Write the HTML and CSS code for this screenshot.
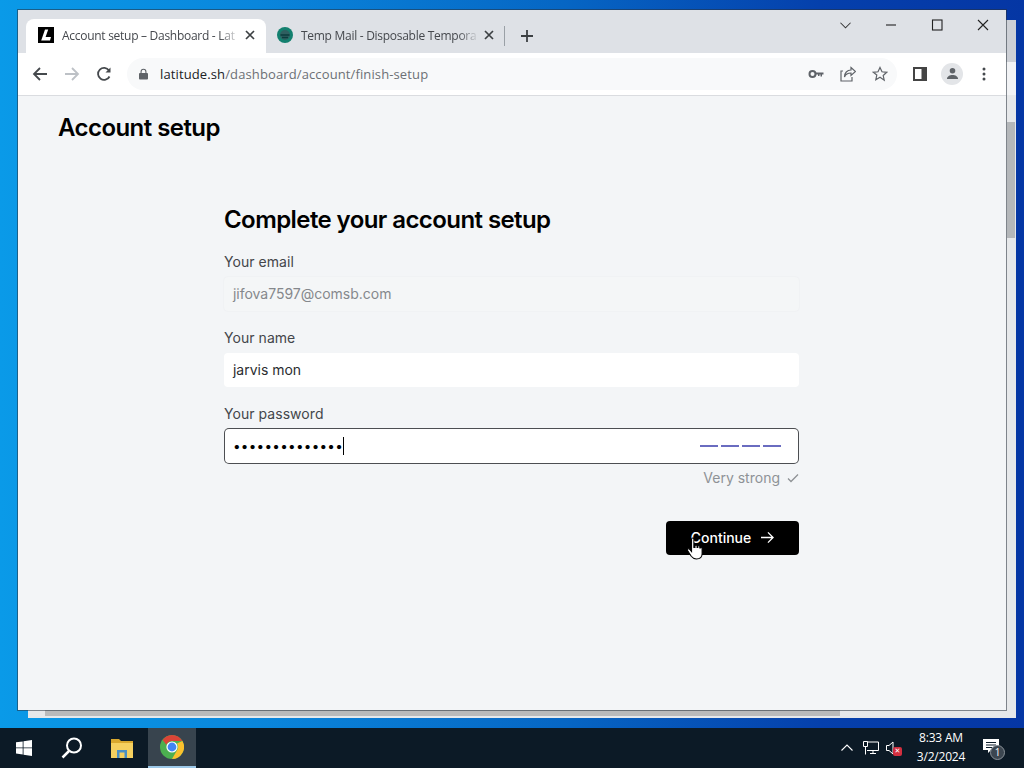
FILE: index.html
```html
<!DOCTYPE html>
<html lang="en">
<head>
<meta charset="utf-8">
<title>Account setup</title>
<link rel="stylesheet" href="styles.css">
</head>
<body>
<div class="desktop">
  <div class="wallpaper">
    <div class="backwin"><div class="backthumb-v"></div><div class="backthumb-h"></div></div>
    <div class="window">
      <div class="titlebar">
        <div class="tabs">
          <div class="tab active">
            <svg class="favicon" viewBox="0 0 16 16"><rect width="16" height="16" fill="#000"/><path d="M7 2.500h3.200L7.600 10H13l-1 3.500H3.200z" fill="#fff"/></svg>
            <span class="tab-title">Account setup – Dashboard - Lat</span>
            <svg class="tab-x" viewBox="0 0 10 10"><path d="M1 1l8 8M9 1l-8 8"/></svg>
          </div>
          <div class="tab">
            <svg class="favicon" viewBox="0 0 16 16"><circle cx="8" cy="8" r="8" fill="#13806f"/><circle cx="8" cy="8" r="5" fill="#2f5f60"/><path d="M3.500 8h9M5 10.500h6" stroke="#0b3d3d" stroke-width="1.300"/></svg>
            <span class="tab-title">Temp Mail - Disposable Tempora</span>
            <svg class="tab-x" viewBox="0 0 10 10"><path d="M1 1l8 8M9 1l-8 8"/></svg>
          </div>
          <div class="tab-sep"></div>
          <svg class="newtab" viewBox="0 0 12 12"><path d="M6 0v12M0 6h12"/></svg>
        </div>
        <div class="winctl">
          <svg class="ctl-chev" viewBox="0 0 12 7"><path d="M.5.500 6 6 11.500.500"/></svg>
          <svg class="ctl" viewBox="0 0 12 12"><path d="M1 6h10"/></svg>
          <svg class="ctl" viewBox="0 0 12 12"><rect x="1.500" y="1" width="9.500" height="10"/></svg>
          <svg class="ctl" viewBox="0 0 12 12"><path d="M1 1l10 10M11 1 1 11"/></svg>
        </div>
      </div>
      <div class="toolbar">
        <svg class="nav" viewBox="0 0 16 16"><path d="M15 8H2M8 2 2 8l6 6"/></svg>
        <svg class="nav off" viewBox="0 0 16 16"><path d="M1 8h13M8 2l6 6-6 6"/></svg>
        <svg class="nav" viewBox="0 0 16 16"><path d="M13.500 10.500A6 6 0 1 1 13 4.500"/><path class="fill" d="M14.500 1.500v5h-5z"/></svg>
        <div class="omnibox">
          <svg class="lock" viewBox="0 0 10 12"><path d="M2.300 5V3.500a2.700 2.700 0 0 1 5.400 0V5" fill="none" stroke="#5f6368" stroke-width="1.200"/><rect y="5" width="10" height="7" rx="1" fill="#5f6368"/></svg>
          <span class="url"><span class="host">latitude.sh</span>/dashboard/account/finish-setup</span>
          <div class="omni-icons">
            <svg class="omni" viewBox="0 0 16 16"><circle cx="4.500" cy="8" r="3" fill="none" stroke="#5f6368" stroke-width="2"/><path d="M7 6.500h8.500v2H14v2h-1.500v-2h-1v1.500H10V8.500H7z" fill="#5f6368"/></svg>
            <svg class="omni line" viewBox="0 0 16 16"><path d="M11 1.500 15.500 5.500 11 9.500V7C7.500 7 5.500 8.500 4.500 11 4.500 7 7 4 11 4zM3 5H1v10h11v-4"/></svg>
            <svg class="omni line" viewBox="0 0 16 16"><path d="M8 1.500l2 4.300 4.700.500-3.500 3.200 1 4.700L8 11.300l-4.200 2.400 1-4.700L1.300 6.300 6 5.800z"/></svg>
          </div>
        </div>
        <div class="tool-right">
          <svg class="panel" viewBox="0 0 14 14"><path fill-rule="evenodd" d="M0 0h14v14H0zM2 2v10h6.500V2z" fill="#444"/></svg>
          <div class="avatar"><svg viewBox="0 0 14 14"><circle cx="7" cy="4" r="3" fill="#5f6368"/><path d="M1 13c0-3 3-4.500 6-4.500s6 1.500 6 4.500z" fill="#5f6368"/></svg></div>
          <svg class="dots" viewBox="0 0 4 14"><circle cx="2" cy="2" r="1.500"/><circle cx="2" cy="7" r="1.500"/><circle cx="2" cy="12" r="1.500"/></svg>
        </div>
      </div>
      <main class="page">
        <h1 class="page-title">Account setup</h1>
        <form class="setup">
          <h2 class="setup-title">Complete your account setup</h2>
          <div class="field">
            <div class="label">Your email</div>
            <div class="input disabled">jifova7597@comsb.com</div>
          </div>
          <div class="field">
            <div class="label">Your name</div>
            <div class="input">jarvis mon</div>
          </div>
          <div class="field tight">
            <div class="label">Your password</div>
            <div class="input focus">
              <span class="pw">••••••••••••••</span><span class="caret"></span>
              <span class="meter"><i></i><i></i><i></i><i></i></span>
            </div>
          </div>
          <div class="strength">Very strong
            <svg viewBox="0 0 12 10"><path d="M1 5.500 4 8.500 11 1.500"/></svg>
          </div>
          <div class="actions">
            <div class="btn">Continue
              <svg viewBox="0 0 16 14"><path d="M1 7h13M8.500 1.500 14 7l-5.500 5.500"/></svg>
              <svg class="cursor" viewBox="0 0 14 22" preserveAspectRatio="none"><path d="M4 2c0-1.300 2-1.300 2 0v8l1 0V8.500c0-1 1.800-1 1.800 0V10l.7 0V9c0-1 1.700-1 1.700 0v1.500l.5 0c0-.8 1.500-.8 1.500 .2V16c0 3-2 5-5 5-2.500 0-3.500-1-4.500-2.500L.500 13c-.8-1.300.8-2.300 1.800-1.200L4 14z" fill="#fff" stroke="#000" stroke-width=".9"/></svg>
            </div>
          </div>
        </form>
      </main>
    </div>
  </div>
  <footer class="taskbar">
    <div class="task-left">
      <div class="tb-btn start"><svg viewBox="0 0 16 16"><path d="M0 2.300 6.700 1.400V7.500H0zM7.500 1.300 16 0V7.500H7.500zM0 8.300H6.700V14.500L0 13.600zM7.500 8.300H16V16L7.500 14.700z" fill="#fff"/></svg></div>
      <div class="tb-btn"><svg class="search" viewBox="0 0 22 22"><circle cx="13" cy="8.500" r="7" fill="none" stroke="#fff" stroke-width="2"/><path d="M8 14 1.500 20.500" stroke="#fff" stroke-width="2.500"/></svg></div>
      <div class="tb-btn"><svg class="folder" viewBox="0 0 22 20"><path d="M0 1h8l2 2h12v5H0z" fill="#d9a82e"/><rect y="5" width="22" height="15" fill="#f5d05f"/><path d="M6 16v-4h10v4h-2.500v-1.500h-5V16z" fill="#4a8fc4"/><rect x="6" y="16" width="2.500" height="4" fill="#4a8fc4"/><rect x="13.500" y="16" width="2.500" height="4" fill="#4a8fc4"/></svg></div>
      <div class="tb-btn chrome">
        <svg viewBox="0 0 24 24"><circle cx="12" cy="12" r="12" fill="#4caf50"/><path d="M12 0a12 12 0 0 1 10.400 6H12a6 6 0 0 0-5.600 3.800L2.600 5A12 12 0 0 1 12 0z" fill="#db4437"/><path d="M22.400 6A12 12 0 0 1 12 24l5-8.700A6 6 0 0 0 17 8.500z" fill="#fbc02d"/><circle cx="12" cy="12" r="5.600" fill="#fff"/><circle cx="12" cy="12" r="4.400" fill="#4285f4"/></svg>
      </div>
    </div>
    <div class="tray">
      <svg class="tray-chev" viewBox="0 0 12 7"><path d="M.5 6.500 6 1l5.500 5.500"/></svg>
      <svg class="tray-net" viewBox="0 0 16 14"><path d="M4 1h11.500v8.500H4M7 12.500h6M10 9.500v3M.5.500h4v5h-4zM2.500 5.500v8"/></svg>
      <div class="tray-vol">
        <svg viewBox="0 0 10 14"><path d="M.5 4.500h2.500L7 1v12L3 9.500H.5z"/></svg>
        <span class="mute">✕</span>
      </div>
      <div class="clock"><span>8:33 AM</span><span>3/2/2024</span></div>
      <div class="notif">
        <svg viewBox="0 0 16 14"><path d="M0 0h16v11H8l-3 3v-3H0z" fill="#fff"/><path d="M3 3.500h10M3 6h10M3 8.500h6" stroke="#0c1c2a"/></svg>
        <span class="badge">1</span>
      </div>
    </div>
  </footer>
</div>
</body>
</html>
```

FILE: styles.css
```css
* { box-sizing: border-box; }
html, body { margin: 0; padding: 0; }
body { width: 1024px; height: 768px; overflow: hidden; font-family: "Inter", "Liberation Sans", sans-serif; }
svg { display: block; flex: none; }

.desktop { width: 1024px; height: 768px; display: flex; flex-direction: column; }
.wallpaper { position: relative; flex: 1; background: linear-gradient(90deg, #0a9ae8 0%, #0a86dc 25%, #0666c4 55%, #0540ac 80%, #0536a4 100%); }

/* windows on the desktop */
.backwin { position: absolute; left: 28px; top: 20px; width: 988px; height: 698px; background: linear-gradient(180deg, #cdd0d6 0 42px, #f2f3f5 42px 75px, #e6e8ea 75px); }
.backthumb-v { position: absolute; right: 1px; top: 102px; width: 8px; height: 116px; background: #b4b7ba; }
.backthumb-h { position: absolute; left: 17px; bottom: 2px; width: 795px; height: 6px; background: #b9babb; }
.window { position: absolute; left: 18px; top: 10px; width: 988px; height: 700px; display: flex; flex-direction: column; box-shadow: 0 0 0 1px rgba(40,50,60,.55); }

/* title bar */
.titlebar { height: 43px; flex: none; background: #dee1e6; display: flex; justify-content: space-between; }
.tabs { display: flex; align-items: flex-end; padding-left: 8px; }
.tab { width: 240px; height: 34px; display: flex; align-items: center; padding: 0 11px 2px 12px; color: #45484d; font: 12px "Open Sans", "Noto Sans", sans-serif; letter-spacing: -.28px; }
.tab + .tab { width: 238px; padding-left: 11px; }
.tab.active { background: #fff; border-radius: 8px 8px 0 0; }
.favicon { width: 16px; height: 16px; margin-right: 8px; }
.tab-title { flex: 1; white-space: nowrap; -webkit-mask-image: linear-gradient(90deg, #000 90%, rgba(0,0,0,.15) 100%); mask-image: linear-gradient(90deg, #000 90%, rgba(0,0,0,.15) 100%); }
.tab-x { width: 10px; height: 10px; margin-left: 8px; fill: none; stroke: #3c4043; stroke-width: 1.700; }
.tab-sep { width: 1px; height: 20px; background: #9aa0a6; margin: 0 0 7px 0; }
.newtab { width: 12px; height: 12px; margin: 0 0 11px 16px; fill: none; stroke: #3c4043; stroke-width: 1.800; }
.winctl { display: flex; align-items: flex-start; padding: 9px 17px 0 0; }
.ctl-chev { width: 11px; height: 7px; margin: 3px 0 0 0; fill: none; stroke: #333; stroke-width: 1.100; }
.ctl { width: 12px; height: 12px; margin-left: 34px; fill: none; stroke: #222; stroke-width: 1.100; }

/* toolbar */
.toolbar { height: 43px; flex: none; background: #fff; border-bottom: 1px solid #dadce0; display: flex; align-items: center; padding: 0 0 1px 14px; }
.nav { width: 16px; height: 16px; margin-right: 16px; fill: none; stroke: #45494d; stroke-width: 1.800; }
.nav .fill { fill: #45494d; stroke: none; }
.nav.off { stroke: #bdc1c6; }
.omnibox { flex: none; width: 770px; height: 32px; margin-left: -1px; border-radius: 16px; background: #f8f9fa; display: flex; align-items: center; padding-left: 12px; }
.lock { width: 9px; height: 12px; margin-right: 12px; }
.url { font: 13px/1 "Open Sans", "Noto Sans", sans-serif; color: #6c7075; letter-spacing: .12px; padding-top: 2px; }
.host { color: #202124; }
.omni-icons { margin-left: auto; display: flex; gap: 16px; padding-right: 9px; }
.omni { width: 16px; height: 16px; }
.omni.line { fill: none; stroke: #5f6368; stroke-width: 1.200; }
.tool-right { display: flex; align-items: center; margin-left: 16px; }
.panel { width: 14px; height: 14px; }
.avatar { width: 22px; height: 22px; margin-left: 14px; border-radius: 50%; background: #e3e5e8; display: flex; align-items: center; justify-content: center; }
.avatar svg { width: 13px; height: 13px; }
.dots { width: 4px; height: 14px; margin-left: 19px; fill: #45494d; }

/* page */
.page { flex: 1; background: #f3f5f7; padding: 16px 40px 0; color: #000; }
.page-title { margin: 0; font-size: 24px; line-height: 32px; font-weight: 600; letter-spacing: -.55px; }
.setup { width: 575px; margin: 60px auto 0 166px; }
.setup-title { margin: 0 0 16px; font-size: 24px; line-height: 32px; font-weight: 600; letter-spacing: -.58px; }
.field { margin-bottom: 17px; }
.field.tight { margin-bottom: 0; }
.label { font-size: 14px; line-height: 20px; color: #43464a; margin-bottom: 5px; letter-spacing: .05px; }
.input { height: 34px; background: #fff; border-radius: 4px; padding: 0 9px; font-size: 14px; line-height: 34px; color: #2b2d30; display: flex; align-items: center; letter-spacing: -.02px; }
.input.disabled { background: #f4f6f7; color: #85888c; box-shadow: 0 0 2px rgba(0,0,0,.05); }
.input.focus { background: #fff; box-shadow: inset 0 0 0 1px #4c4e52; border-radius: 5px; height: 36px; color: #000; margin-top: -1px; }
.pw { font-size: 13.500px; letter-spacing: .27px; white-space: nowrap; }
.caret { width: 1px; height: 18px; background: #000; }
.meter { margin-left: auto; display: flex; gap: 3px; margin-right: 9px; }
.meter i { width: 18px; height: 2px; background: #6a6cc0; }
.strength { display: flex; justify-content: flex-end; align-items: center; gap: 7px; margin-top: 4px; font-size: 14px; line-height: 20px; color: #8e9296; }
.strength svg { width: 12px; height: 10px; fill: none; stroke: #8e9296; stroke-width: 1.300; }
.actions { display: flex; justify-content: flex-end; margin-top: 33px; }
.btn { position: relative; width: 133px; height: 34px; background: #000; color: #fff; border-radius: 4px; display: flex; align-items: center; justify-content: center; gap: 9px; font-size: 14px; font-weight: 500; padding: 0 0 1px 1px; }
.btn svg { width: 15px; height: 13px; fill: none; stroke: #fff; stroke-width: 1.400; }
.btn svg.cursor { position: absolute; left: 21px; top: 16px; width: 16px; height: 23px; stroke: none; }

/* taskbar */
.taskbar { height: 40px; flex: none; background: #0c1a26; display: flex; justify-content: space-between; color: #fff; }
.task-left { display: flex; }
.tb-btn { width: 48px; height: 40px; display: flex; align-items: center; justify-content: center; margin-right: 2px; }
.tb-btn svg { width: 16px; height: 16px; }
.tb-btn .search { width: 22px; height: 22px; }
.tb-btn .folder { width: 22px; height: 20px; }
.tb-btn.chrome { background: #38444e; border-bottom: 2px solid #9cc8e8; margin: 0; }
.tb-btn.chrome svg { width: 24px; height: 24px; }
.start { margin-right: 0; }
.tray { display: flex; align-items: center; padding-right: 25px; }
.tray-chev { width: 12px; height: 7px; fill: none; stroke: #fff; stroke-width: 1.100; margin-top: -2px; }
.tray-net { width: 16px; height: 14px; margin-left: 10px; fill: none; stroke: #fff; stroke-width: 1; }
.tray-vol { position: relative; width: 10px; height: 14px; margin-left: 7px; }
.tray-vol svg { width: 10px; height: 14px; fill: none; stroke: #fff; stroke-width: 1; }
.mute { position: absolute; left: 7px; top: 6px; width: 9px; height: 9px; border-radius: 2px; background: #d32f3f; color: #fff; font: 7px/9px "DejaVu Sans", sans-serif; text-align: center; }
.clock { width: 60px; margin-left: 15px; display: flex; flex-direction: column; align-items: center; gap: 3px; font: 12px/16px "Open Sans", "Noto Sans", sans-serif; letter-spacing: -.2px; margin-top: -1px; }
.notif { position: relative; width: 16px; height: 14px; margin-left: 12px; margin-top: -4px; }
.notif svg { width: 16px; height: 14px; }
.badge { position: absolute; left: 7px; top: 6px; width: 15px; height: 15px; border-radius: 50%; background: #3c4650; border: 1px solid #8a9299; color: #fff; font: 10px/13px "Open Sans", sans-serif; text-align: center; }
```
